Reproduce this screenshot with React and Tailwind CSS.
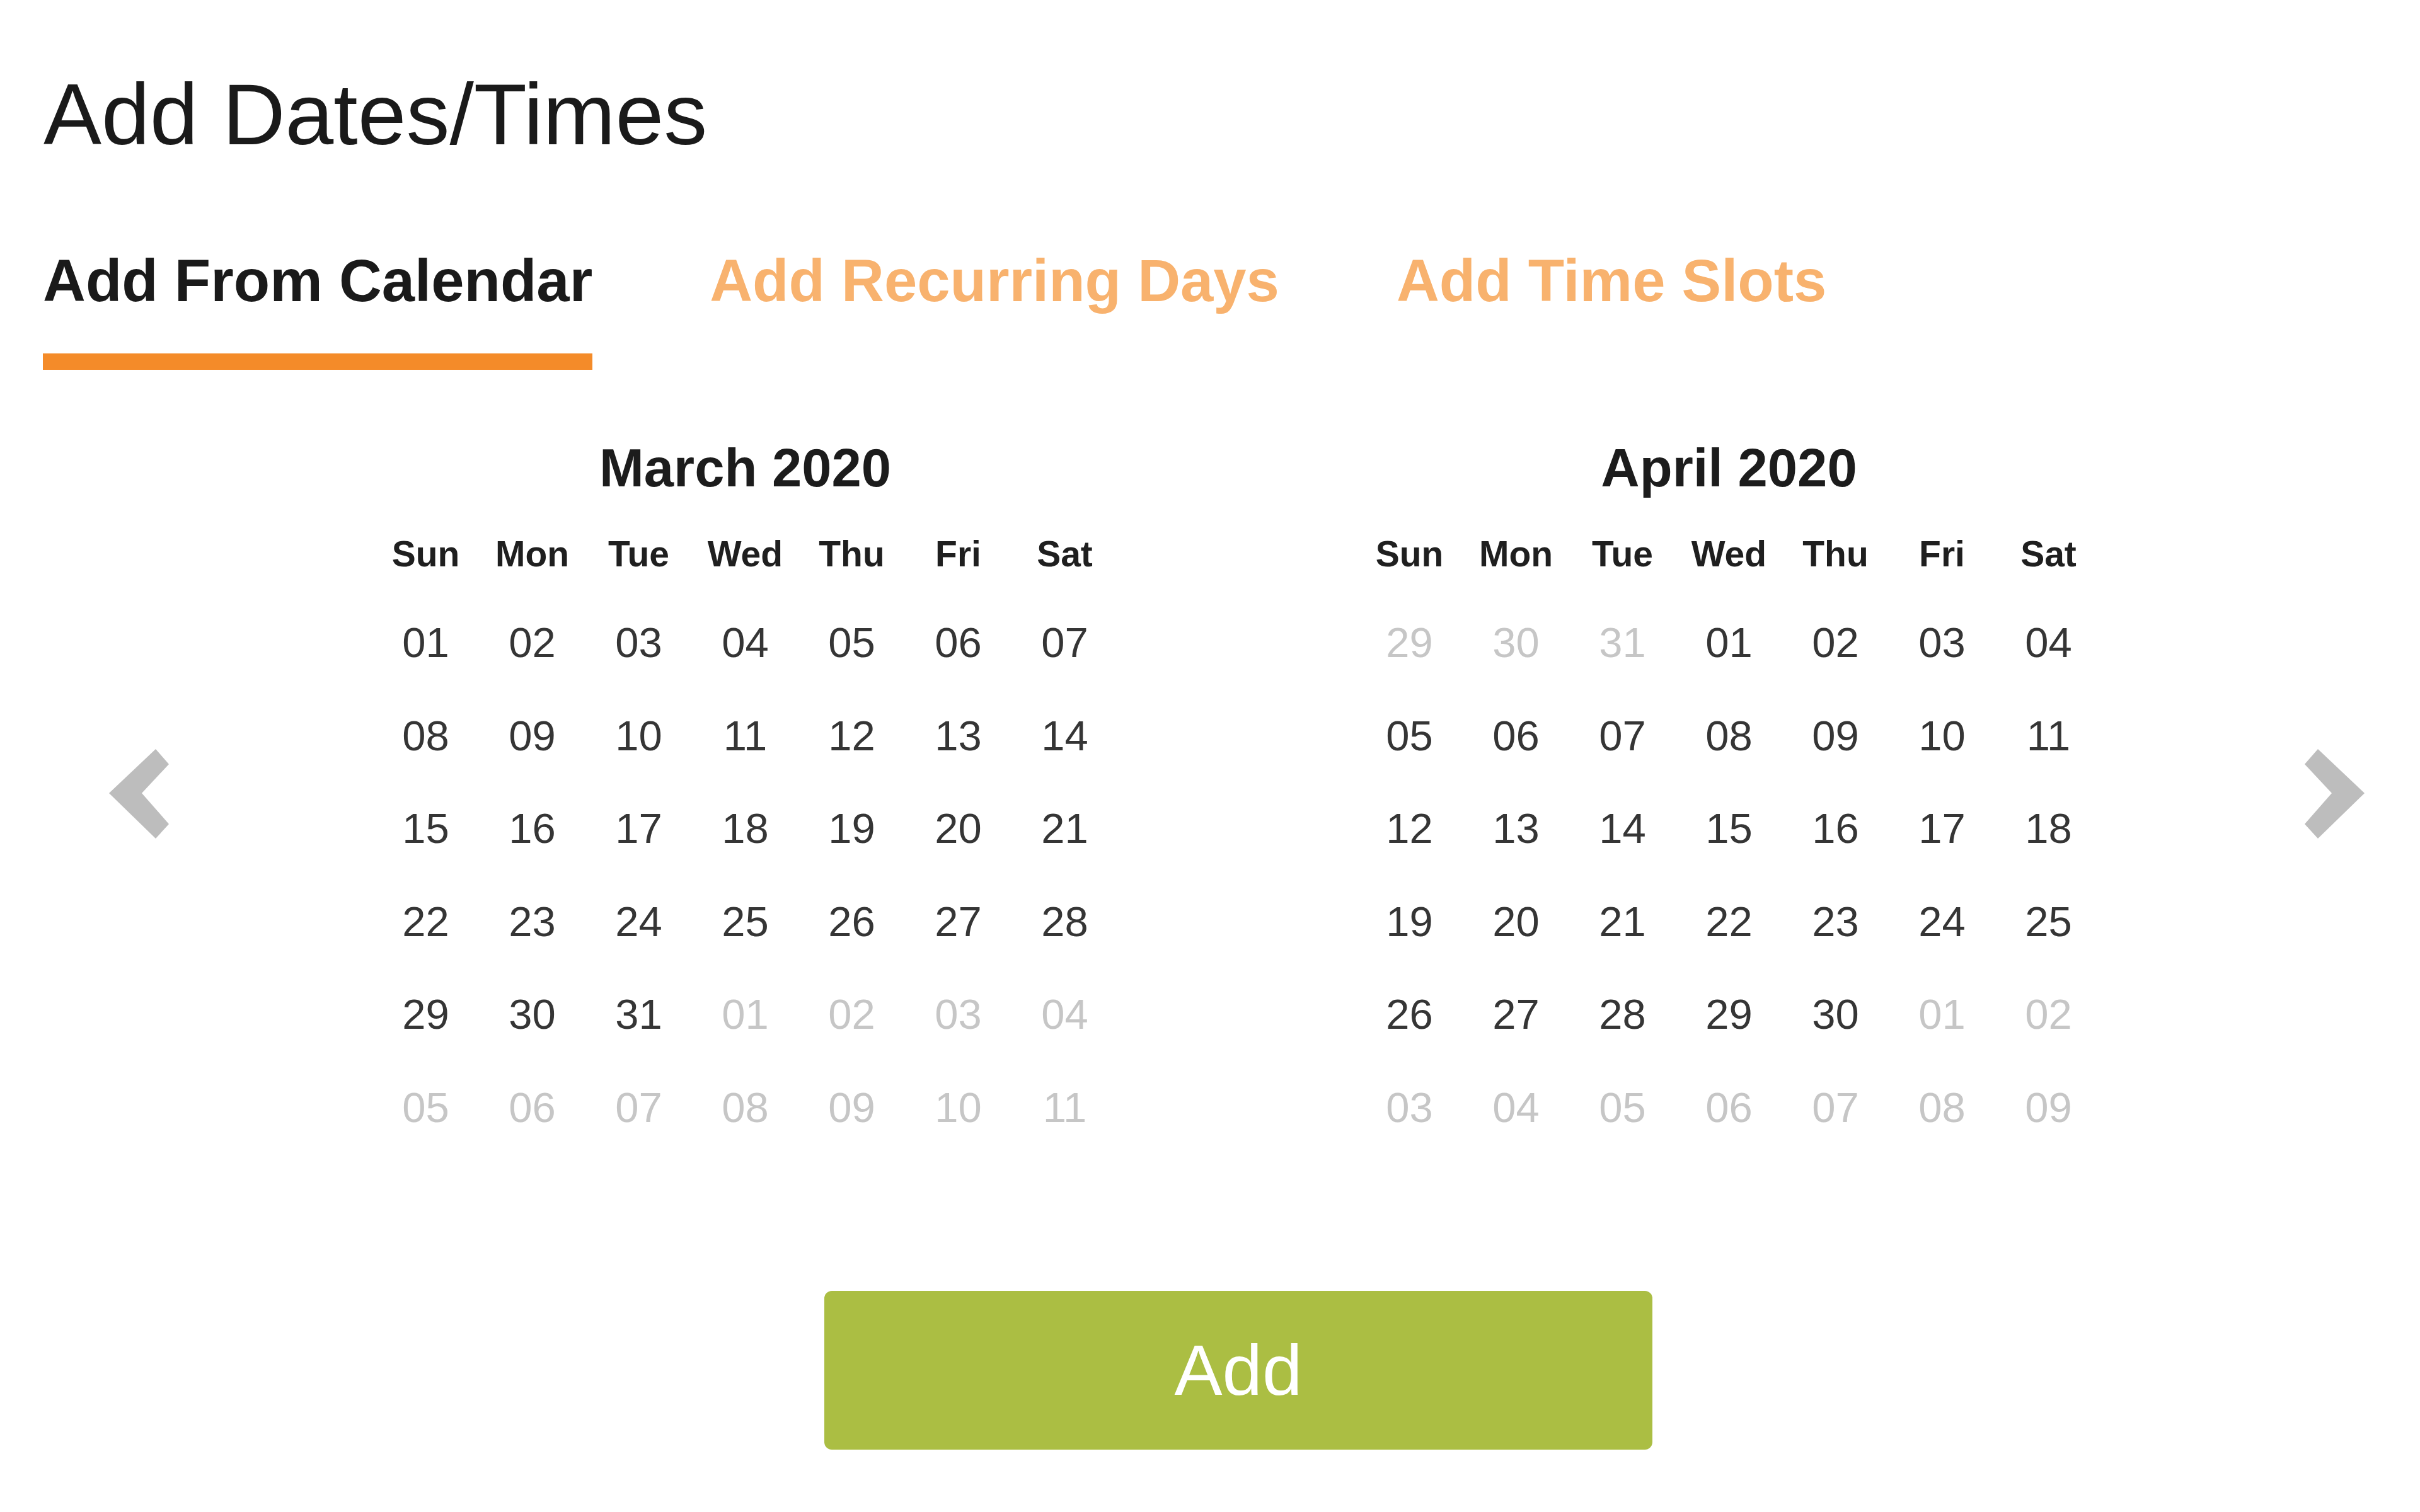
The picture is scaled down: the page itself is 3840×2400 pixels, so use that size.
import React from "react";

const pad = (n) => String(n).padStart(2, "0");

// build a 6x7 grid of { day, muted } for a month
const buildMonth = (lead, daysInMonth, prevDays) => {
  const cells = [];
  for (let i = lead; i > 0; i--) cells.push({ day: prevDays - i + 1, muted: true });
  for (let d = 1; d <= daysInMonth; d++) cells.push({ day: d, muted: false });
  let next = 1;
  while (cells.length < 42) cells.push({ day: next++, muted: true });
  return cells;
};

const WEEKDAYS = ["Sun", "Mon", "Tue", "Wed", "Thu", "Fri", "Sat"];

const MONTHS = [
  { title: "March 2020", cells: buildMonth(0, 31, 29) },
  { title: "April 2020", cells: buildMonth(3, 30, 31) },
];

const ChevronLeft = () => (
  <svg width="95" height="142" viewBox="0 0 95 142" className="shrink-0 mt-[489px]">
    <polygon points="0,70 74,0 95,24 52,70 95,119 74,142" fill="#bdbdbd" />
  </svg>
);

const ChevronRight = () => (
  <svg width="95" height="142" viewBox="0 0 95 142" className="shrink-0 mt-[489px]">
    <polygon points="95,70 21,0 0,24 43,70 0,119 21,142" fill="#bdbdbd" />
  </svg>
);

const Month = ({ title, cells, className = "" }) => (
  <div className={`w-[1183px] shrink-0 ${className}`}>
    <h2 className="text-center text-[85px] font-bold leading-none text-[#1c1c1c]">{title}</h2>
    <div className="mt-[66px] grid grid-cols-7">
      {WEEKDAYS.map((w) => (
        <div key={w} className="text-center text-[57px] font-bold leading-none text-[#1f1f1f]">
          {w}
        </div>
      ))}
    </div>
    <div className="mt-[38px] grid grid-cols-7">
      {cells.map((c, i) => (
        <div
          key={i}
          className={`h-[147.5px] text-center text-[67px] leading-[147.5px] ${
            c.muted ? "text-[#c6c6c6]" : "text-[#353535]"
          }`}
        >
          {pad(c.day)}
        </div>
      ))}
    </div>
  </div>
);

export default function App() {
  return (
    <div className="min-h-screen w-full bg-white font-['Liberation_Sans',Arial,sans-serif]">
      <h1 className="pl-[69px] pt-[112px] text-[138px] font-normal leading-none text-[#1a1a1a]">
        Add Dates/Times
      </h1>

      {/* Tabs */}
      <div className="mt-[149px] flex items-start gap-[186px] pl-[68px]">
        <div className="flex flex-col">
          <span className="text-[94px] font-bold leading-none text-[#1a1a1a]">Add From Calendar</span>
          <div className="mt-[68px] h-[26px] w-full bg-[#f48b29]" />
        </div>
        <span className="text-[94px] font-bold leading-none text-[#f8b26e]">Add Recurring Days</span>
        <span className="text-[94px] font-bold leading-none text-[#f8b26e]">Add Time Slots</span>
      </div>

      {/* Calendars */}
      <div className="mt-[113px] flex items-start pl-[173px]">
        <ChevronLeft />
        <Month {...MONTHS[0]} className="ml-[323px]" />
        <Month {...MONTHS[1]} className="ml-[378px]" />
        <div className="ml-[322px]">
          <ChevronRight />
        </div>
      </div>

      <button
        type="button"
        className="ml-[1308px] mt-[218px] flex h-[252px] w-[1314px] items-center justify-center rounded-[12px] bg-[#abbe43] text-[114px] font-normal leading-none text-white"
      >
        Add
      </button>
    </div>
  );
}
